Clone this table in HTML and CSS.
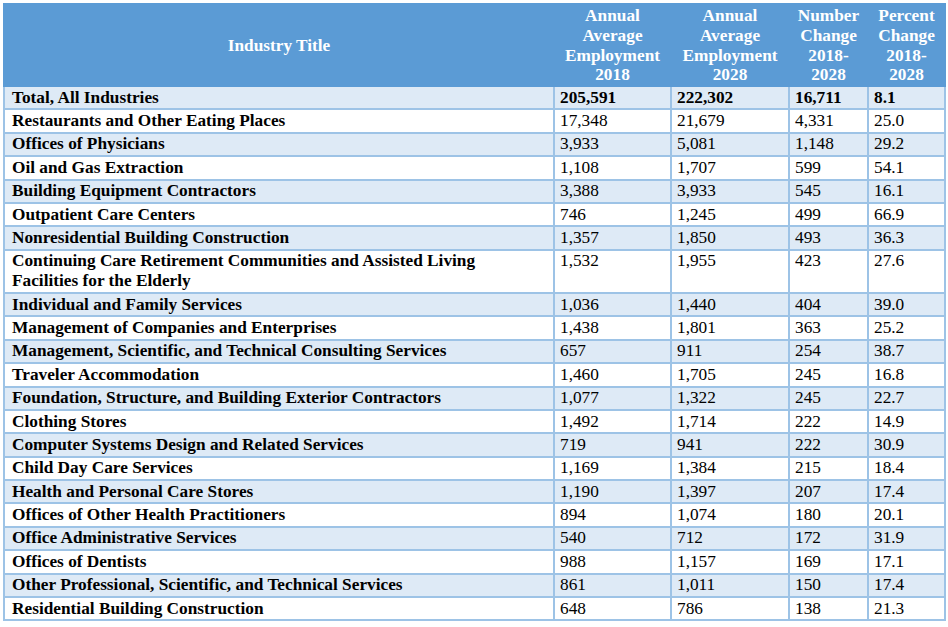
FILE: index.html
```html
<!DOCTYPE html>
<html>
<head>
<meta charset="utf-8">
<title>Industry Employment Projections</title>
<link rel="stylesheet" href="styles.css">
</head>
<body>
<table class="grid">
  <colgroup>
    <col class="c-title">
    <col class="c-emp">
    <col class="c-emp2">
    <col class="c-num">
    <col class="c-pct">
  </colgroup>
  <thead>
    <tr>
      <th>Industry Title</th>
      <th>Annual<br>Average<br>Employment<br>2018</th>
      <th>Annual<br>Average<br>Employment<br>2028</th>
      <th>Number<br>Change<br>2018-<br>2028</th>
      <th>Percent<br>Change<br>2018-<br>2028</th>
    </tr>
  </thead>
  <tbody>
    <tr class="band total"><td>Total, All Industries</td><td>205,591</td><td>222,302</td><td>16,711</td><td>8.1</td></tr>
    <tr><td>Restaurants and Other Eating Places</td><td>17,348</td><td>21,679</td><td>4,331</td><td>25.0</td></tr>
    <tr class="band"><td>Offices of Physicians</td><td>3,933</td><td>5,081</td><td>1,148</td><td>29.2</td></tr>
    <tr><td>Oil and Gas Extraction</td><td>1,108</td><td>1,707</td><td>599</td><td>54.1</td></tr>
    <tr class="band"><td>Building Equipment Contractors</td><td>3,388</td><td>3,933</td><td>545</td><td>16.1</td></tr>
    <tr><td>Outpatient Care Centers</td><td>746</td><td>1,245</td><td>499</td><td>66.9</td></tr>
    <tr class="band"><td>Nonresidential Building Construction</td><td>1,357</td><td>1,850</td><td>493</td><td>36.3</td></tr>
    <tr><td>Continuing Care Retirement Communities and Assisted Living<br>Facilities for the Elderly</td><td>1,532</td><td>1,955</td><td>423</td><td>27.6</td></tr>
    <tr class="band"><td>Individual and Family Services</td><td>1,036</td><td>1,440</td><td>404</td><td>39.0</td></tr>
    <tr><td>Management of Companies and Enterprises</td><td>1,438</td><td>1,801</td><td>363</td><td>25.2</td></tr>
    <tr class="band"><td>Management, Scientific, and Technical Consulting Services</td><td>657</td><td>911</td><td>254</td><td>38.7</td></tr>
    <tr><td>Traveler Accommodation</td><td>1,460</td><td>1,705</td><td>245</td><td>16.8</td></tr>
    <tr class="band"><td>Foundation, Structure, and Building Exterior Contractors</td><td>1,077</td><td>1,322</td><td>245</td><td>22.7</td></tr>
    <tr><td>Clothing Stores</td><td>1,492</td><td>1,714</td><td>222</td><td>14.9</td></tr>
    <tr class="band"><td>Computer Systems Design and Related Services</td><td>719</td><td>941</td><td>222</td><td>30.9</td></tr>
    <tr><td>Child Day Care Services</td><td>1,169</td><td>1,384</td><td>215</td><td>18.4</td></tr>
    <tr class="band"><td>Health and Personal Care Stores</td><td>1,190</td><td>1,397</td><td>207</td><td>17.4</td></tr>
    <tr><td>Offices of Other Health Practitioners</td><td>894</td><td>1,074</td><td>180</td><td>20.1</td></tr>
    <tr class="band"><td>Office Administrative Services</td><td>540</td><td>712</td><td>172</td><td>31.9</td></tr>
    <tr><td>Offices of Dentists</td><td>988</td><td>1,157</td><td>169</td><td>17.1</td></tr>
    <tr class="band"><td>Other Professional, Scientific, and Technical Services</td><td>861</td><td>1,011</td><td>150</td><td>17.4</td></tr>
    <tr><td>Residential Building Construction</td><td>648</td><td>786</td><td>138</td><td>21.3</td></tr>
  </tbody>
</table>
</body>
</html>
```
FILE: styles.css
```css
html, body {
  margin: 0;
  padding: 0;
  background: #ffffff;
}

body {
  padding: 3px 0 0 3px;
  font-family: "Liberation Serif", "Times New Roman", serif;
  font-size: 17.3px;
  color: #000000;
}

.grid {
  border-collapse: collapse;
  table-layout: fixed;
  width: 941px;
}

.c-title { width: 550px; }
.c-emp { width: 117px; }
.c-emp2 { width: 118px; }
.c-num { width: 79px; }
.c-pct { width: 77px; }

.grid th {
  background: #5b9bd5;
  color: #ffffff;
  font-weight: bold;
  text-align: center;
  vertical-align: middle;
  line-height: 19.75px;
  padding: 1px 0 0;
  border: 2px solid #5b9bd5;
}

.grid td {
  border: 2px solid #9dc3e6;
  line-height: 20px;
  padding: 0.7px 4px 0.7px 5px;
  vertical-align: top;
  text-align: left;
  white-space: nowrap;
}

.grid td:first-child {
  font-weight: bold;
  padding-left: 7px;
}

.grid tr.band td {
  background: #deeaf6;
}

.grid tr.total td {
  font-weight: bold;
}
```
